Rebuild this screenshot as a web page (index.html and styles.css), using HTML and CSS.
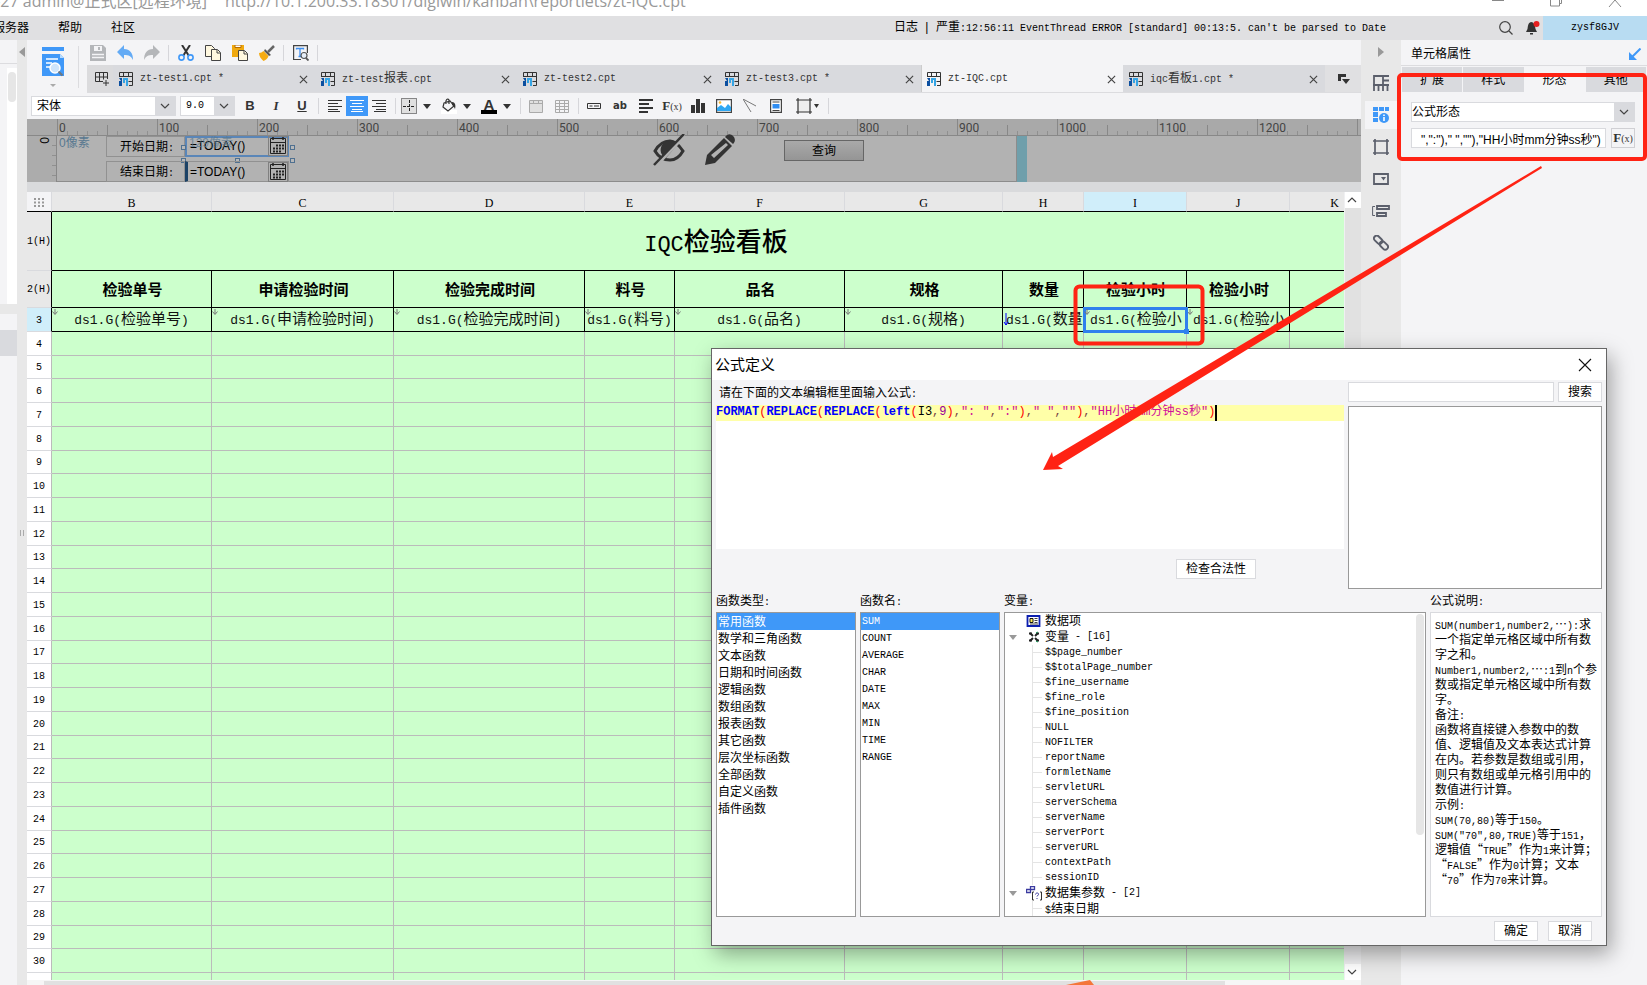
FILE: index.html
```html
<!DOCTYPE html>
<html lang="zh-CN">
<head>
<meta charset="utf-8">
<title>zt-IQC.cpt</title>
<link rel="stylesheet" href="styles.css">
</head>
<body>
<svg class="defs" aria-hidden="true">
  <symbol id="chev" viewBox="0 0 10 6"><path d="M1 1l4 4 4-4" fill="none" stroke="#444" stroke-width="1.2"/></symbol>
  <symbol id="tri" viewBox="0 0 8 5"><path d="M0 0h8L4 5z" fill="#333"/></symbol>
  <symbol id="x" viewBox="0 0 10 10"><path d="M1 1l8 8M9 1l-8 8" fill="none" stroke="#444" stroke-width="1.3"/></symbol>
  <symbol id="cpt" viewBox="0 0 14 14"><path d="M.5 5V.5h13v13H10M.5 4.500h13M4.500.5v4M9.500.5V5M9.500 9.500h4" fill="none" stroke="#333"/><path d="M0 6h3v8H0V9h2" fill="#0b4fa0"/><path d="M4 6h5v8H7V8H6v3H4z" fill="#35a5e5"/></symbol>
  <symbol id="cal" viewBox="0 0 18 18"><path d="M1.500 1.500h15v15h-15zM1.500 5.500h15" fill="none" stroke="#222"/><path d="M4 0v3M14 0v3" stroke="#222" stroke-width="1.500"/><path d="M7 8.500h8M4 11.500h11M4 14.500h8" stroke="#222" stroke-width="2" stroke-dasharray="2 1"/></symbol>
  <symbol id="down" viewBox="0 0 6 6"><path d="M3 0v5M.5 2.500L3 5.500l2.500-3" fill="none" stroke="#777"/></symbol>
</svg>

<header class="titlebar">
  <div class="title">9-27 admin@正式区[远程环境]<span class="url">http://10.1.200.33:18301/digiwin/kanban\reportlets/zt-IQC.cpt</span></div>
  <svg class="winbtns" width="130" height="8" viewBox="0 0 130 8" fill="none" stroke="#888"><path d="M0 .5h12M58.500-3v9h9v-9M67 3.500h2.500V-3M117 7l6-7 6 7"/></svg>
</header>

<nav class="menubar">
  <a class="menu" href="#">服务器</a><a class="menu" href="#">帮助</a><a class="menu" href="#">社区</a>
  <div class="log"><span>日志</span><span class="bar">|</span><span>严重<span class="m">:12:56:11 EventThread ERROR [standard] 00:13:5. can't be parsed to Date</span></span></div>
  <svg width="14" height="14" viewBox="0 0 14 14" fill="none" stroke="#444" stroke-width="1.200"><circle cx="6" cy="6" r="5.300"/><path d="M10 10l3.500 3.500"/></svg>
  <svg class="bell" width="14" height="14" viewBox="0 0 14 14"><path d="M5 1c-3 1-3 4-3.500 7L0 11h11L9.500 8C9 4 8 1 5 1zM4 12h3v1.500H4z" fill="#333"/><circle cx="10.500" cy="3" r="3" fill="#e62020"/></svg>
  <button class="user m">zysf8GJV</button>
</nav>

<div class="work">
  <aside class="leftpanel">
    <div class="lp-head"></div>
    <div class="lp-tree"><i></i></div>
    <div class="lp-split"></div>
    <div class="lp-row"></div>
  </aside>
  <div class="splitter">
    <svg class="sp-arrow" width="6" height="10" viewBox="0 0 6 10"><path d="M6 0v10L0 5z" fill="#999"/></svg>
    <svg width="4" height="6" viewBox="0 0 4 6"><path d="M.5 0v6M3.500 0v6" stroke="#aaa"/></svg>
  </div>

  <main class="editor">
    <div class="top">
      <button class="big" aria-label="数据集">
        <svg width="22" height="40" viewBox="0 0 22 40"><path d="M0 0h22v4H0zM0 7h18l4 4v18H0z" fill="#3f98f8"/><path d="M18 7v4h4" fill="#b8dcff"/><path d="M4 12h12M4 16h6M4 20h4" stroke="#fff" stroke-width="1.500"/><circle cx="13" cy="21" r="5" fill="#cfe5fb" stroke="#fff" stroke-width="1.500"/><path d="M16.500 24.500l4 4" stroke="#6b7785" stroke-width="2.200"/><path d="M8 37h6l-3 3z" fill="#aaa"/></svg>
      </button>
      <div class="topright">
        <div class="tools">
          <button aria-label="保存"><svg width="16" height="16" viewBox="0 0 16 16"><path d="M0 0h13l3 3v13H0z" fill="#b4b6b9"/><path d="M4 1h8v5H4z" fill="#f4f4f6"/><path d="M8 2h2v3H8z" fill="#b4b6b9"/><path d="M2 9.500h12M2 12.500h12" stroke="#f4f4f6" stroke-width="1.300"/></svg></button>
          <button aria-label="撤销"><svg width="16" height="16" viewBox="0 0 16 16"><path d="M0 7l7-7v4c6 0 9 4 9 11-2-4-4-5-9-5v4z" fill="#64abf5"/></svg></button>
          <button aria-label="重做"><svg width="16" height="16" viewBox="0 0 16 16"><path d="M16 7L9 0v4C3 4 0 8 0 15c2-4 4-5 9-5v4z" fill="#b4b6b9"/></svg></button>
          <i class="sep"></i>
          <button aria-label="剪切"><svg width="16" height="16" viewBox="0 0 16 16" fill="none"><path d="M4 0l7 11M12 0L5 11" stroke="#333" stroke-width="2"/><circle cx="3.500" cy="12.500" r="2.600" stroke="#3f98f8" stroke-width="1.600"/><circle cx="12.500" cy="12.500" r="2.600" stroke="#3f98f8" stroke-width="1.600"/></svg></button>
          <button aria-label="复制"><svg width="16" height="16" viewBox="0 0 16 16" fill="#fff8e0" stroke="#444"><path d="M.5.5h6l3 3v8h-9z"/><path d="M6.500 4.500h6l3 3v8h-9z"/><path d="M12 5v3h3" fill="none"/></svg></button>
          <button aria-label="粘贴"><svg width="16" height="16" viewBox="0 0 16 16"><path d="M0 0h12v12H0z" fill="#f0a90f"/><path d="M3 0h6v2.500H3z" fill="#fff" stroke="#b56b00"/><path d="M6.500 5.500h6l3 3v7h-9z" fill="#fff8e0" stroke="#444"/><path d="M12 6v3h3" fill="none" stroke="#444"/></svg></button>
          <button aria-label="格式刷"><svg width="16" height="16" viewBox="0 0 16 16"><path d="M15 1l-6 6" stroke="#666" stroke-width="2.500"/><path d="M6 4l6 6-2 1-5-5z" fill="#555"/><path d="M4.500 6l5 5c-1 3-3 4-5 5C2 14 0 11 0 8c2 0 3-1 4.500-2z" fill="#f5ab12"/></svg></button>
          <i class="sep"></i>
          <button aria-label="查找"><svg width="16" height="16" viewBox="0 0 16 16" fill="none"><path d="M8 14.500H.6V.6h13.800V8" stroke="#444" stroke-width="1.200"/><path d="M3.500 4.500V3.500h7v1M7 3.500v8M5.500 11.500h3" stroke="#3f8ff0" stroke-width="1.300"/><circle cx="11" cy="10.500" r="3" fill="#e6eef8" stroke="#555" stroke-width="1.200"/><path d="M13 13l2.500 2.500" stroke="#555" stroke-width="1.800"/></svg></button>
          <i class="sep"></i>
        </div>
        <div class="tabs">
          <button class="addtab" aria-label="新建"><svg width="14" height="14" viewBox="0 0 14 14" fill="none" stroke="#333"><path d="M8 9.500H.5V.5h12V7M.5 5h12M4.500.5v9M8.500.5v7M11 8v6M8 11h6"/></svg></button>
          <div class="tab"><svg width="14" height="14"><use href="#cpt"/></svg><span class="m">zt-test1.cpt *</span><button aria-label="关闭"><svg width="9" height="9"><use href="#x"/></svg></button></div>
          <div class="tab"><svg width="14" height="14"><use href="#cpt"/></svg><span><span class="m">zt-test</span>报表<span class="m">.cpt</span></span><button aria-label="关闭"><svg width="9" height="9"><use href="#x"/></svg></button></div>
          <div class="tab"><svg width="14" height="14"><use href="#cpt"/></svg><span class="m">zt-test2.cpt</span><button aria-label="关闭"><svg width="9" height="9"><use href="#x"/></svg></button></div>
          <div class="tab"><svg width="14" height="14"><use href="#cpt"/></svg><span class="m">zt-test3.cpt *</span><button aria-label="关闭"><svg width="9" height="9"><use href="#x"/></svg></button></div>
          <div class="tab active"><svg width="14" height="14"><use href="#cpt"/></svg><span class="m">zt-IQC.cpt</span><button aria-label="关闭"><svg width="9" height="9"><use href="#x"/></svg></button></div>
          <div class="tab"><svg width="14" height="14"><use href="#cpt"/></svg><span><span class="m">iqc</span>看板<span class="m">1.cpt *</span></span><button aria-label="关闭"><svg width="9" height="9"><use href="#x"/></svg></button></div>
          <button class="more" aria-label="更多"><svg width="12" height="10" viewBox="0 0 12 10"><path d="M0 0h8v3H3v4H0zM4 5h8l-4 5z" fill="#333"/></svg></button>
        </div>
      </div>
    </div>

    <div class="format">
      <span class="combo font"><select aria-label="字体"><option>宋体</option></select><svg width="10" height="6"><use href="#chev"/></svg></span>
      <span class="combo size"><select class="m" aria-label="字号"><option>9.0</option></select><svg width="10" height="6"><use href="#chev"/></svg></span>
      <button class="b26"><b>B</b></button><button class="b26 it">I</button><button class="b26 un">U</button>
      <i class="sep"></i>
      <span class="aligns">
        <button aria-label="左对齐"><svg width="14" height="12" viewBox="0 0 14 12" stroke="#333"><path d="M0 .5h14M0 3.500h10M0 6.500h14M0 9.500h10M0 11.500h12"/></svg></button>
        <button class="on" aria-label="居中"><svg width="14" height="12" viewBox="0 0 14 12" stroke="#fff"><path d="M0 .5h14M2 3.500h10M0 6.500h14M2 9.500h10M1 11.500h12"/></svg></button>
        <button aria-label="右对齐"><svg width="14" height="12" viewBox="0 0 14 12" stroke="#333"><path d="M0 .5h14M4 3.500h10M0 6.500h14M4 9.500h10M2 11.500h12"/></svg></button>
      </span>
      <i class="sep"></i>
      <span class="pairs">
        <button aria-label="边框"><svg width="16" height="16" viewBox="0 0 16 16" fill="#e0e0e0" stroke="#222"><path d="M.5.5h15v15H.5z" stroke-dasharray="1 1"/><path d="M8.500 2v12M2 8.500h12" stroke-dasharray="3 1"/></svg><svg width="8" height="5"><use href="#tri"/></svg></button>
        <button aria-label="填充"><svg width="16" height="16" viewBox="0 0 16 16"><path d="M0 12h16v4H0z" fill="#fff"/><path d="M3 5l6-2 4 5-6 5-5-4zM5 6c-1-5 2-6 3-4v4" fill="none" stroke="#333" stroke-width="1.200"/><path d="M11 4c3 0 4 3 3 7-1-2-1-3-3-4z" fill="#333"/></svg><svg width="8" height="5"><use href="#tri"/></svg></button>
        <button aria-label="字色"><span class="fc">A</span><svg width="8" height="5"><use href="#tri"/></svg></button>
      </span>
      <i class="sep"></i>
      <button class="b26" aria-label="合并"><svg width="14" height="13" viewBox="0 0 14 13" fill="#e0e0e0" stroke="#aaa"><path d="M.5.500h13v12H.5zM.5 3.500h13M4.500.5v3M9.500.5v3"/></svg></button>
      <button class="b26" aria-label="拆分"><svg width="14" height="13" viewBox="0 0 14 13" fill="none" stroke="#aaa"><path d="M.5.500h13v12H.5zM.5 3.500h13M.5 6.500h13M.5 9.500h13M4.500.5v12M9.500.5v12"/></svg></button>
      <i class="sep"></i>
      <button class="b26" aria-label="控件"><svg width="14" height="6" viewBox="0 0 14 6" fill="none" stroke="#333"><path d="M.5.5h13v5H.5zM2.500 3h3M7 3h5"/></svg></button>
      <button class="b26 ab">ab</button>
      <button class="b26" aria-label="文本"><svg width="14" height="14" viewBox="0 0 14 14" stroke="#333" stroke-width="1.800"><path d="M0 1h14M0 5h10M0 9h14M0 13h9"/></svg></button>
      <button class="b26 fx">F<small>(x)</small></button>
      <button class="b26" aria-label="图表"><svg width="14" height="14" viewBox="0 0 14 14" fill="#333"><path d="M0 6h4v8H0zM5 0h4v14H5zM10 4h4v10h-4z"/></svg></button>
      <button class="b26" aria-label="图片"><svg width="16" height="14" viewBox="0 0 16 14"><path d="M.6.6h14.800v12.800H.6z" fill="#fff" stroke="#444" stroke-width="1.200"/><path d="M1 12V9l4-3 4 3 3-4 3 3v4z" fill="#2fa7f2"/><circle cx="4" cy="3.500" r="1.300" fill="#f7b733"/></svg></button>
      <button class="b26" aria-label="斜线"><svg width="14" height="14" viewBox="0 0 14 14" fill="none" stroke="#777"><path d="M0 0l13 7M0 0l8 13"/></svg></button>
      <button class="b26" aria-label="子报表"><svg width="12" height="14" viewBox="0 0 12 14"><path d="M.6.6h10.800v12.800H.6z" fill="#fff" stroke="#444" stroke-width="1.200"/><path d="M2.500 3h7M2.500 11.500h7" stroke="#444"/><path d="M2.500 5h7v4.500h-7z" fill="#2f8df2"/></svg></button>
      <button class="wide" aria-label="悬浮"><svg width="16" height="16" viewBox="0 0 16 16" fill="#eee" stroke="#333" stroke-width="1.200"><path d="M2 2h12v12H2zM2 0v2M14 0v2M2 14v2M14 14v2M0 2h2M0 14h2M14 2h2M14 14h2"/></svg><svg width="5" height="4" viewBox="0 0 5 4"><path d="M0 0h5L2.500 4z" fill="#333"/></svg></button>
      <i class="sep"></i>
    </div>

    <section class="param">
      <div class="ruler"><span>0</span><span>100</span><span>200</span><span>300</span><span>400</span><span>500</span><span>600</span><span>700</span><span>800</span><span>900</span><span>1000</span><span>1100</span><span>1200</span><span></span></div>
      <div class="canvasrow">
        <div class="vruler"><span>0</span></div>
        <div class="canvas">
          <span class="px p0">0像素</span>
          <div class="plabel r1">开始日期<span class="m">:</span></div>
          <div class="pfield r1 sel"><span>=TODAY()</span><svg width="18" height="18"><use href="#cal"/></svg></div>
          <span class="px p1">129像素</span>
          <i class="h h1"></i><i class="h h2"></i><i class="h h3"></i><i class="h h4"></i><i class="h h5"></i>
          <div class="plabel r2">结束日期<span class="m">:</span></div>
          <div class="pfield r2"><span>=TODAY()</span><svg width="18" height="18"><use href="#cal"/></svg></div>
          <svg class="eye" width="32" height="32" viewBox="0 0 32 32" fill="none"><path d="M2 17C6 10 12 7 17 7s9 4 13 10c-4 7-8 9-13 9S6 24 2 17z" stroke="#333" stroke-width="3"/><path d="M9 11c4-5 12-6 16-1L13 24c-5-2-7-8-4-13z" fill="#333"/><path d="M28.500 0L-1 31" transform="translate(3.500 1.500)" stroke="#b2b2b2" stroke-width="3"/><path d="M31 0L1 31" stroke="#333" stroke-width="2.500"/></svg>
          <svg class="pencil" width="32" height="32" viewBox="0 0 32 32" fill="#333"><path fill-rule="evenodd" d="M1 31l2-10L20 4l8 8-17 17zM7 21l3 3L24 11l-2-2z"/><path d="M21 3c3-4 6-3 8-1s3 5 0 8z"/></svg>
          <button class="query">查询</button>
        </div>
        <div class="handle"></div>
      </div>
    </section>

    <div class="sheet">
      <div class="gridwrap">
        <table class="grid">
          <colgroup><col class="c0"><col class="cB"><col class="cC"><col class="cD"><col class="cE"><col class="cF"><col class="cG"><col class="cH"><col class="cI"><col class="cI"><col class="cK"></colgroup>
          <thead><tr><th class="corner"><svg width="10" height="9" viewBox="0 0 10 9"><path d="M1 0v9M5 0v9M9 0v9" stroke="#999" stroke-width="2" stroke-dasharray="2 1.500"/></svg></th><th>B</th><th>C</th><th>D</th><th>E</th><th>F</th><th>G</th><th>H</th><th class="cur">I</th><th>J</th><th>K</th></tr></thead>
          <tbody>
          <tr class="r-title"><th>1(H)</th><td colspan="10"><span>IQC</span>检验看板</td></tr>
          <tr class="r-head"><th>2(H)</th><td>检验单号<td>申请检验时间<td>检验完成时间<td>料号<td>品名<td>规格<td>数量<td>检验小时<td>检验小时<td></tr>
          <tr class="r-data"><th class="cur">3</th><td><svg><use href="#down"/></svg><span>ds1.G(</span>检验单号<span>)</span><td><svg><use href="#down"/></svg><span>ds1.G(</span>申请检验时间<span>)</span><td><svg><use href="#down"/></svg><span>ds1.G(</span>检验完成时间<span>)</span><td><svg><use href="#down"/></svg><span>ds1.G(</span>料号<span>)</span><td><svg><use href="#down"/></svg><span>ds1.G(</span>品名<span>)</span><td><svg><use href="#down"/></svg><span>ds1.G(</span>规格<span>)</span><td class="cut"><svg class="blue" viewBox="0 0 6 18"><path d="M3 4v12M1 13l2 3 2-3" fill="none" stroke="#00f"/></svg><span>ds1.G(</span>数量<td class="cut selected"><svg><use href="#down"/></svg><span>ds1.G(</span>检验小<i class="grip"></i><td class="cut next"><svg><use href="#down"/></svg><span>ds1.G(</span>检验小<td></tr>
          <tr><th>4<td><td><td><td><td><td><td><td><td><td></tr>
          <tr><th>5<td><td><td><td><td><td><td><td><td><td></tr>
          <tr><th>6<td><td><td><td><td><td><td><td><td><td></tr>
          <tr><th>7<td><td><td><td><td><td><td><td><td><td></tr>
          <tr><th>8<td><td><td><td><td><td><td><td><td><td></tr>
          <tr><th>9<td><td><td><td><td><td><td><td><td><td></tr>
          <tr><th>10<td><td><td><td><td><td><td><td><td><td></tr>
          <tr><th>11<td><td><td><td><td><td><td><td><td><td></tr>
          <tr><th>12<td><td><td><td><td><td><td><td><td><td></tr>
          <tr><th>13<td><td><td><td><td><td><td><td><td><td></tr>
          <tr><th>14<td><td><td><td><td><td><td><td><td><td></tr>
          <tr><th>15<td><td><td><td><td><td><td><td><td><td></tr>
          <tr><th>16<td><td><td><td><td><td><td><td><td><td></tr>
          <tr><th>17<td><td><td><td><td><td><td><td><td><td></tr>
          <tr><th>18<td><td><td><td><td><td><td><td><td><td></tr>
          <tr><th>19<td><td><td><td><td><td><td><td><td><td></tr>
          <tr><th>20<td><td><td><td><td><td><td><td><td><td></tr>
          <tr><th>21<td><td><td><td><td><td><td><td><td><td></tr>
          <tr><th>22<td><td><td><td><td><td><td><td><td><td></tr>
          <tr><th>23<td><td><td><td><td><td><td><td><td><td></tr>
          <tr><th>24<td><td><td><td><td><td><td><td><td><td></tr>
          <tr><th>25<td><td><td><td><td><td><td><td><td><td></tr>
          <tr><th>26<td><td><td><td><td><td><td><td><td><td></tr>
          <tr><th>27<td><td><td><td><td><td><td><td><td><td></tr>
          <tr><th>28<td><td><td><td><td><td><td><td><td><td></tr>
          <tr><th>29<td><td><td><td><td><td><td><td><td><td></tr>
          <tr><th>30<td><td><td><td><td><td><td><td><td><td></tr>
          <tr><th><td><td><td><td><td><td><td><td><td><td></tr>
          </tbody>
        </table>
      </div>
      <div class="vscroll">
        <button aria-label="向上"><svg class="flip" width="10" height="6"><use href="#chev"/></svg></button>
        <div class="thumb"></div>
        <button aria-label="向下"><svg width="10" height="6"><use href="#chev"/></svg></button>
      </div>
    </div>
    <div class="hscroll"><i></i></div>
  </main>

  <nav class="strip">
    <button class="collapse" aria-label="收起"><svg width="6" height="10" viewBox="0 0 6 10"><path d="M0 0v10l6-5z" fill="#999"/></svg></button>
    <button aria-label="单元格元素"><svg width="16" height="16" viewBox="0 0 16 16" fill="none" stroke="#5b5f6b" stroke-width="1.800"><path d="M1 16V1h9v9H0M10 1h6M10 5.500h6M10 10h6M5.500 10v6M10 10v6M14.500 10v6"/></svg></button>
    <button class="on" aria-label="单元格属性"><svg width="16" height="16" viewBox="0 0 16 16" fill="#3f98f8"><path d="M0 0h5v4H0zM6 0h5v4H6zM12 0h4v4h-4zM0 5h5v5H0zM0 11h5v4H0z"/><circle cx="11" cy="11" r="5"/><path d="M11 7.500v1.500M11 10v4" stroke="#fff" stroke-width="1.600"/></svg></button>
    <button aria-label="悬浮元素"><svg width="16" height="16" viewBox="0 0 16 16" fill="none" stroke="#5b5f6b" stroke-width="1.700"><path d="M2 2h12v12H2zM2 0v2M14 0v2M2 14v2M14 14v2M0 2h2M0 14h2M14 2h2M14 14h2"/></svg></button>
    <button aria-label="控件设置"><svg width="16" height="12" viewBox="0 0 16 12" fill="none" stroke="#5b5f6b" stroke-width="1.800"><path d="M1 1h14v10H1z"/><path d="M8 4h5l-2.500 3.500z" fill="#5b5f6b" stroke="none"/></svg></button>
    <button aria-label="条件属性"><svg width="18" height="12" viewBox="0 0 18 12" fill="none" stroke="#5b5f6b" stroke-width="1.800"><path d="M5 1h12v3H5zM5 8h9v3H5z"/><path d="M3 1.500H.6v9H3" stroke-width="1"/></svg></button>
    <button aria-label="超级链接"><svg width="16" height="16" viewBox="0 0 16 16" fill="none" stroke="#5b5f6b" stroke-width="1.900"><g transform="rotate(45 8 8)"><rect x="-1" y="5" width="9.500" height="5.500" rx="2.750"/><rect x="7" y="5" width="9.500" height="5.500" rx="2.750"/></g></svg></button>
  </nav>

  <aside class="props">
    <div class="phead"><span>单元格属性</span><svg width="12" height="12" viewBox="0 0 12 12"><path d="M11.500.5L3 9" stroke="#3f98f8" stroke-width="2"/><path d="M0 4v8h8z" fill="#3f98f8"/></svg></div>
    <div class="ptabs"><button>扩展</button><button>样式</button><button class="on">形态</button><button>其他</button></div>
    <div class="pbody">
      <span class="combo"><select aria-label="形态"><option>公式形态</option></select><svg width="10" height="6"><use href="#chev"/></svg></span>
      <div class="prow"><input aria-label="公式" value='",":")," ",""),"HH小时mm分钟ss秒")'><button class="fx">F<small>(x)</small></button></div>
    </div>
  </aside>
</div>

<section class="dialog" role="dialog" aria-label="公式定义">
  <div class="dtitle"><span>公式定义</span><button aria-label="关闭"><svg width="14" height="14" viewBox="0 0 14 14"><path d="M1 1l12 12M13 1L1 13" stroke="#111" stroke-width="1.100"/></svg></button></div>
  <div class="dbody">
    <div class="dtop">
      <div class="dleft">
        <div class="dlabel">请在下面的文本编辑框里面输入公式<span class="m">:</span></div>
        <div class="code"><div class="line"><b>FORMAT</b><i>(</i><b>REPLACE</b><i>(</i><b>REPLACE</b><i>(</i><b>left</b><i>(</i>I3<u>,</u><s>9</s><i>)</i><u>,</u><q>": "</q><u>,</u><q>":"</q><i>)</i><u>,</u><q>" "</q><u>,</u><q>""</q><i>)</i><u>,</u><q>"HH小时mm分钟ss秒"</q><i>)</i><span class="caret"></span></div></div>
        <button class="btn check">检查合法性</button>
      </div>
      <div class="dright">
        <div class="srow"><input aria-label="搜索"><button class="btn">搜索</button></div>
        <div class="result"></div>
      </div>
    </div>
    <div class="dcols">
      <div class="dcol"><div class="dlabel2">函数类型<span class="m">:</span></div>
        <ul class="list"><li class="on">常用函数<li>数学和三角函数<li>文本函数<li>日期和时间函数<li>逻辑函数<li>数组函数<li>报表函数<li>其它函数<li>层次坐标函数<li>全部函数<li>自定义函数<li>插件函数</ul></div>
      <div class="dcol"><div class="dlabel2">函数名<span class="m">:</span></div>
        <ul class="list m"><li class="on">SUM<li>COUNT<li>AVERAGE<li>CHAR<li>DATE<li>MAX<li>MIN<li>TIME<li>RANGE</ul></div>
      <div class="dcol grow"><div class="dlabel2">变量<span class="m">:</span></div>
        <div class="list tree">
          <div class="node"><svg class="tg" width="8" height="5"></svg><svg width="16" height="12" viewBox="0 0 16 12"><path d="M1.500 1h12v10h-12z" fill="#fff" stroke="#0c1fb0" stroke-width="1.800"/><path d="M4 3.500h3v4H4z" fill="#ffee55" stroke="#111"/><path d="M8.500 3.500h3M8.500 5.500h3M4 9h8M8.500 7.500h3" stroke="#111" stroke-width=".8"/></svg>数据项</div>
          <div class="node"><svg class="tg" width="8" height="5" viewBox="0 0 8 5"><path d="M0 0h8L4 5z" fill="#999"/></svg><svg width="16" height="12" viewBox="0 0 16 12"><path d="M4 2l3 3M12 2L9 5M4 10l3-3M12 10L9 7" fill="none" stroke="#222" stroke-width="2"/><path d="M3 2.500h3M10 2.500h3M3 9.500h3M10 9.500h3" stroke="#222" stroke-width="2"/><path d="M10 2l2-1M10 10l2 1" stroke="#1a9a5a"/></svg>变量<span class="m">&nbsp;- [16]</span></div>
          <ul class="vars m"><li>$$page_number<li>$$totalPage_number<li>$fine_username<li>$fine_role<li>$fine_position<li>NULL<li>NOFILTER<li>reportName<li>formletName<li>servletURL<li>serverSchema<li>serverName<li>serverPort<li>serverURL<li>contextPath<li>sessionID</ul>
          <div class="node"><svg class="tg" width="8" height="5" viewBox="0 0 8 5"><path d="M0 0h8L4 5z" fill="#999"/></svg><svg width="16" height="15" viewBox="0 0 16 15" fill="none"><path d="M.5 3.500h4v3h-4zM4.500.5h4v3h-4z" stroke="#3b3ba0" stroke-width="1.300"/><path d="M8 6H6.500v8H8M14 6h1.500v8H14" stroke="#333"/><path d="M9.500 8.500c0-2 3.500-2 3 0L11 10.500M11 12v1" stroke="#3b3ba0"/></svg>数据集参数<span class="m">&nbsp;- [2]</span></div>
          <ul class="vars"><li><span class="m">$</span>结束日期</ul>
          <i class="tscroll"></i>
        </div></div>
      <div class="dcol desc"><div class="dlabel2">公式说明<span class="m">:</span></div>
        <div class="list text"><p><span class="m">SUM(number1,number2,</span>…<span class="m">):</span>求<br>一个指定单元格区域中所有数<br>字之和。<p><span class="m">Number1,number2,</span>…<span class="m">:1</span>到<span class="m">n</span>个参<br>数或指定单元格区域中所有数<br>字。<p>备注<span class="m">:</span><p>函数将直接键入参数中的数<br>值、逻辑值及文本表达式计算<br>在内。若参数是数组或引用，<br>则只有数组或单元格引用中的<br>数值进行计算。<p>示例<span class="m">:</span><p><span class="m">SUM(70,80)</span>等于<span class="m">150</span>。<p><span class="m">SUM("70",80,TRUE)</span>等于<span class="m">151</span>，<br>逻辑值“<span class="m">TRUE</span>”作为<span class="m">1</span>来计算；<br>“<span class="m">FALSE</span>”作为<span class="m">0</span>计算；文本<br>“<span class="m">70</span>”作为<span class="m">70</span>来计算。</div></div>
    </div>
    <div class="dfoot"><button class="btn">确定</button><button class="btn">取消</button></div>
  </div>
</section>

<svg class="marks" width="1647" height="985" viewBox="0 0 1647 985" fill="none" stroke="#ff2314" stroke-width="4">
  <rect x="1075.500" y="286.500" width="127" height="57" rx="4"/>
  <rect x="1399" y="75" width="246" height="84" rx="3"/>
  <path d="M1541 166L1053 457l-1-5-9 18 20-1-5-3L1542 168z" fill="#ff2314" stroke="none"/>
  <path d="M1066 985l24-5 4 5z" fill="#f4763a" stroke="none"/>
</svg>
</body>
</html>
```
FILE: styles.css
```css
* { box-sizing: border-box; }
html, body { height: 100%; }
body {
  margin: 0;
  display: flex;
  flex-direction: column;
  overflow: hidden;
  background: #f4f4f6;
  color: #000;
  font-family: "Liberation Sans", "Noto Sans CJK SC", sans-serif;
  font-size: 12px;
  line-height: 16px;
}
button, input, select { font: inherit; color: inherit; margin: 0; padding: 0; border: 0; border-radius: 0; background: none; }
button { display: flex; align-items: center; justify-content: center; }
ul, p { margin: 0; padding: 0; list-style: none; }
a { color: inherit; text-decoration: none; }
svg { display: block; flex: none; }
.defs { position: absolute; width: 0; height: 0; }
.m { font-family: "Liberation Mono", "Noto Sans CJK SC", monospace; font-size: 10px; }

.titlebar { height: 16px; flex: none; display: flex; justify-content: space-between; background: #fff; overflow: hidden; }
.title { margin: -10px 0 0 -14px; color: #999; font-family: "Open Sans", "Noto Sans CJK SC", sans-serif; font-size: 16px; line-height: 22px; white-space: nowrap; }
.url { margin-left: 18px; }
.winbtns { margin-right: 25px; }

.menubar { height: 24px; flex: none; display: flex; align-items: center; background: #e0e0e2; white-space: nowrap; }
.menu { margin-right: 29px; }
.menu:first-child { margin-left: -7px; }
.log { margin-left: auto; display: flex; margin-right: 113px; }
.log .bar { width: 18px; text-align: center; }
.bell { margin: 0 3px 0 13px; }
.user { width: 104px; height: 24px; background: #b8dcf2; }

.work { flex: 1; min-height: 0; display: flex; }
.leftpanel { width: 17px; flex: none; display: flex; flex-direction: column; }
.lp-head { height: 24px; border-bottom: 1px solid #dcdcdf; }
.lp-tree { height: 236px; margin-top: 4px; margin-left: 7px; padding: 4px 1px; background: #fff; }
.lp-tree i { display: block; height: 30px; border-radius: 4px; background: #e6e6e6; }
.lp-split { height: 10px; background: #e8e8e8; }
.lp-row { height: 26px; margin-top: 16px; background: #d9dade; }
.splitter { width: 10px; flex: none; display: flex; flex-direction: column; justify-content: space-between; align-items: center; padding: 7px 0 449px; background: #e8e8e8; }

.editor { flex: 1; min-width: 0; display: flex; flex-direction: column; }
.top { height: 53px; display: flex; flex: none; }
.big { width: 52px; height: 42px; margin-top: 6px; border-right: 1px solid #dcdcdf; flex: none; align-items: flex-start; padding: 1px 0 0; }
.topright { flex: 1; min-width: 0; display: flex; flex-direction: column; }
.tools { height: 25px; display: flex; align-items: center; padding-left: 5px; }
.tools button { width: 27px; height: 22px; }
.sep { flex: none; width: 7px; height: 16px; background: linear-gradient(#d6d6da, #d6d6da) 3px 0 / 1px 100% no-repeat; }
.tabs { height: 28px; margin-left: 8px; display: flex; background: #e0e0e2; border-bottom: 1px solid #dcdcdf; }
.addtab { width: 26px; padding-left: 4px; background: #dbdbdd; }
.tab { width: 202px; flex: 0 1 202px; display: flex; align-items: center; gap: 7px; padding: 1px 7px 0 6px; background: #d9dade; color: #333; white-space: nowrap; }
.tab button { margin-left: auto; }
.tab.active { background: #f4f4f6; border-left: 1px solid #ccc; padding-left: 5px; }
.more { margin-left: 13px; }

.format { height: 26px; flex: none; display: flex; align-items: center; padding-left: 4px; }
.format .sep { width: 6px; }
.combo { display: grid; grid-template-columns: 1fr 20px; height: 20px; border: 1px solid #d9dade; background: linear-gradient(#d9dade, #d9dade) right / 20px 100% no-repeat #fff; align-items: center; justify-items: center; }
.combo select { appearance: none; width: 100%; height: 18px; grid-area: 1 / 1 / 2 / 3; }
.combo svg { grid-area: 1 / 2; pointer-events: none; }
.combo.font { width: 145px; }
.combo.font select, .combo.size select { padding-left: 5px; }
.combo.size { width: 55px; margin: 0 2px 0 4px; }
.b26 { width: 26px; height: 22px; font-size: 13px; color: #333; }
.it { font-family: "Liberation Serif", serif; font-style: italic; font-weight: bold; }
.un { text-decoration: underline; font-weight: bold; }
.aligns { display: flex; padding: 0 2px 0 3px; }
.aligns button { width: 22px; height: 20px; }
.aligns .on { background: #3f98f8; }
.pairs { display: flex; gap: 4px; padding-right: 3px; }
.pairs button { width: 36px; justify-content: space-between; padding: 0 3px; }
.fc { width: 16px; height: 16px; line-height: 13px; border-bottom: 4px solid #000; font-weight: bold; font-size: 15px; color: #333; text-align: center; }
.ab { font-family: "DejaVu Sans", sans-serif; font-size: 10px; font-weight: bold; }
.fx { display: block; font-family: "Liberation Serif", serif; font-size: 13px; font-weight: bold; color: #333; white-space: nowrap; text-align: center; }
.fx small { font-size: 10px; font-weight: normal; }
.wide { width: 36px; gap: 2px; padding-left: 0; }

.param { flex: none; background: #b2b2b2; }
.ruler { height: 17px; padding-left: 30px; display: flex; overflow: hidden; border-bottom: 1px solid #888; color: #444; background:
  repeating-linear-gradient(90deg, #888 0 1px, transparent 1px 100px) 30px 0 / 100% 17px no-repeat,
  repeating-linear-gradient(90deg, #888 0 1px, transparent 1px 50px) 30px 6px / 100% 11px no-repeat,
  repeating-linear-gradient(90deg, #909090 0 1px, transparent 1px 10px) 30px 12px / 100% 5px no-repeat, #a9a9a9; }
.ruler span { flex: none; width: 100px; padding: 1px 0 0 2px; font-family: Roboto, sans-serif; }
.canvasrow { height: 46px; display: flex; }
.vruler { width: 30px; padding: 1px 5px 0 13px; border-right: 1px solid #888; background: repeating-linear-gradient(#909090 0 1px, transparent 1px 10px) 25px 9px / 5px 100% no-repeat, #acacac; }
.vruler span { display: block; width: 8px; font-size: 12px; line-height: 8px; writing-mode: vertical-rl; }
.canvas { position: relative; width: 960px; border: solid #8c8c8c; border-width: 0 1px 1px 0; flex: none; }
.handle { width: 10px; background: #6f9fab; }
.canvas > * { position: absolute; }
.px { color: #587890; line-height: 14px; }
.p0 { left: 2px; top: 0; }
.p1 { left: 132px; top: 0; opacity: .7; }
.plabel { left: 49px; width: 79px; height: 21px; padding-left: 13px; line-height: 20px; border: 1px solid #919191; }
.r1 { top: 0; }
.r2 { top: 25px; }
.pfield { left: 128px; width: 104px; height: 21px; display: flex; align-items: center; justify-content: space-between; padding: 0 1px 0 4px; border: 1px solid #919191; font-size: 12px; }
.pfield svg { outline: 1px solid #808080; }
.pfield.sel { border: 2px solid #5a86b8; padding: 0 0 2px 3px; }
.pfield.r2 { border-left: 3px solid #1c4266; padding-left: 2px; }
.h { width: 5px; height: 5px; border: 1px solid #4f7090; background: #b8b8b8; }
.h1 { left: 124px; top: 9px; } .h2 { left: 233px; top: 9px; }
.h3 { left: 124px; top: 22px; } .h4 { left: 178px; top: 22px; } .h5 { left: 233px; top: 22px; }
.eye { left: 596px; top: -2px; }
.pencil { left: 647px; top: -2px; }
.query { left: 727px; top: 4px; width: 80px; height: 21px; border: 1px solid #666; background: linear-gradient(#a9a9a9, #959595); }

.sheet { flex: 1; min-height: 0; display: flex; border-top: 10px solid #d9dadc; }
.gridwrap { flex: 1; min-width: 0; overflow: hidden; background: #cfc; }
.grid { width: 1353px; table-layout: fixed; border-collapse: separate; border-spacing: 0; }
.c0 { width: 25px; } .cB { width: 160px; } .cC { width: 182px; } .cD { width: 191px; } .cE { width: 90px; }
.cF { width: 170px; } .cG { width: 158px; } .cH { width: 81px; } .cI { width: 103px; } .cK { width: 90px; }
.grid th, .grid td { padding: 0; overflow: hidden; white-space: nowrap; text-align: center; }
.grid tr { height: 24px; }
.grid tbody tr:nth-child(4n+5) { height: 23px; }
.grid th { padding-top: 2px; background: #fff; font-family: "Liberation Mono", monospace; font-size: 10px; font-weight: normal; line-height: 14px; border-right: 1px solid #bbb; border-bottom: 1px solid #d9dade; }
.grid thead tr { height: 20px; }
.grid thead th { background: #e8e8e8; border-bottom-color: #000; border-right-color: #d9dade; font-family: "Liberation Serif", serif; font-size: 12px; }
.grid thead th.corner { background: #f4f4f6; }
.grid thead th.cur, .grid th.cur { background: #d0eefa; }
.corner svg { margin: 0 auto; }
.grid td { background: #cfc; border-right: 1px solid #bbb; border-bottom: 1px solid #bbb; }
.grid td:last-child { border-right: 0; }
.grid .r-title { height: 59px; }
.grid .r-head { height: 37px; }
.r-title th, .r-head th { background: #e8e8e8; }
.grid .r-title td, .grid .r-head td, .grid .r-data td { border-color: #000; }
.grid .r-title th, .grid .r-head th, .grid .r-data th { border-right-color: #000; }
.grid .r-title td { padding-top: 6px; font-size: 26px; line-height: 32px; font-weight: 500; }
.r-title span { font-family: "Liberation Mono", monospace; font-size: 22px; }
.grid .r-head td { padding: 2px 0 0 2px; font-size: 15px; font-weight: bold; line-height: 20px; }
.r-data td { position: relative; font-size: 15px; line-height: 20px; color: #111; }
.r-data span { font-family: "Liberation Mono", monospace; font-size: 13px; }
.r-data svg { position: absolute; left: 0; top: 1px; width: 6px; height: 6px; }
.r-data .blue { height: 18px; }
.grid .cut { text-align: left; padding-left: 3px; }
.grid .selected, .grid .next { padding-left: 6px; }
.grid .selected { z-index: 1; outline: 3px solid #2f80ed; outline-offset: -2px; overflow: visible; }
.grip { position: absolute; right: -3px; bottom: -3px; width: 5px; height: 5px; background: #2f80ed; }
.vscroll { width: 17px; flex: none; display: flex; flex-direction: column; background: #f0f0f2; padding-left: 1px; }
.vscroll button { height: 16px; padding-right: 2px; background: #fff; }
.vscroll .thumb { flex: 1; margin-bottom: 20px; background: #e1e1e1; }
.flip { transform: rotate(180deg); }
.hscroll { height: 5px; flex: none; padding: 1px 136px 0 17px; background: #f6f6f6; }
.hscroll i { display: block; height: 4px; background: #e1e1e1; }

.strip { width: 40px; flex: none; display: flex; flex-direction: column; padding: 2px 0 0 4px; background: #e8e8e8; }
.strip button { height: 28px; margin-bottom: 4px; padding-right: 4px; }
.strip .collapse { height: 20px; margin-bottom: 7px; }
.strip .on { background: #f4f4f6; }

.props { width: 246px; flex: none; }
.phead { height: 26px; display: flex; align-items: center; justify-content: space-between; padding: 2px 6px 0 10px; border-bottom: 1px solid #dcdcdf; }
.ptabs { display: grid; grid-template-columns: repeat(4, 1fr); gap: 1px; padding: 0 1px; margin-top: 1px; }
.ptabs button { height: 25px; background: #d9dade; }
.ptabs .on { background: #f4f4f6; }
.pbody { display: flex; flex-direction: column; gap: 6px; padding: 10px 12px 0 10px; }
.prow { display: flex; gap: 5px; }
.prow input { flex: 1; min-width: 0; height: 20px; padding-left: 9px; border: 1px solid #d9dade; background: #fff; }
.prow button { width: 24px; border: 1px solid #d0d0d4; }

.dialog { position: absolute; left: 711px; top: 348px; width: 896px; border: 1px solid #666; background: #f4f4f6; box-shadow: 4px 8px 20px rgba(0, 0, 0, .35); }
.dtitle { height: 31px; display: flex; align-items: center; justify-content: space-between; padding: 0 14px 0 3px; background: #fff; font-size: 15px; }
.dbody { padding: 2px 4px 4px; }
.dtop { display: flex; gap: 4px; }
.dleft { flex: 1; min-width: 0; display: flex; flex-direction: column; }
.dlabel { height: 23px; padding-left: 3px; line-height: 22px; }
.code { height: 144px; background: #fff; }
.line { height: 16px; display: flex; background: #ffffa8; font-family: "Liberation Mono", "Noto Sans CJK SC", monospace; font-size: 12px; line-height: 15px; white-space: pre; }
.line b { color: #00f; }
.line i { color: #f00; font-style: normal; }
.line u { color: #744; text-decoration: none; }
.line s { color: #909; text-decoration: none; }
.line q { color: #d0109a; quotes: none; }
.caret { width: 2px; background: #000; }
.btn { height: 20px; width: 44px; border: 1px solid #d9dade; background: #fff; }
.check { width: 80px; margin: 10px 88px 0 auto; }
.dright { width: 254px; flex: none; }
.srow { display: flex; gap: 4px; }
.srow input { flex: 1; min-width: 0; height: 20px; border: 1px solid #d9dade; background: #fff; }
.result { height: 183px; margin: 4px 0 1px; border: 1px solid #999; background: #fff; }
.dcols { display: flex; gap: 4px; }
.dcol { width: 140px; flex: none; }
.dcol.grow { flex: 1; min-width: 0; }
.dcol.desc { width: 172px; }
.dlabel2 { height: 22px; line-height: 22px; }
.list { position: relative; height: 305px; border: 1px solid #999; background: #fff; overflow: hidden; }
.list li { height: 17px; padding-left: 1px; line-height: 18px; }
.list .on { background: #3f98f8; color: #fff; }
.node { height: 16px; display: flex; align-items: center; padding-left: 4px; }
.node .tg { margin-right: 9px; }
.node svg + svg { margin-right: 3px; }
.vars { margin-left: 27px; border-left: 1px solid #e4e4e4; }
.tree .vars li { height: 15px; padding-left: 12px; line-height: 16px; background: linear-gradient(#e4e4e4, #e4e4e4) 0 7px / 9px 1px no-repeat; }
.tscroll { position: absolute; right: 1px; top: 1px; width: 8px; height: 221px; border-radius: 4px; background: #e6e6e6; }
.text { border-color: #d9dade; padding: 3px 0 0 4px; font-family: "Noto Sans CJK SC", sans-serif; line-height: 15px; white-space: nowrap; }
.text .m { line-height: 0; }
.dfoot { display: flex; justify-content: flex-end; gap: 10px; padding: 4px 10px 0; }

.marks { position: absolute; left: 0; top: 0; pointer-events: none; }
```
